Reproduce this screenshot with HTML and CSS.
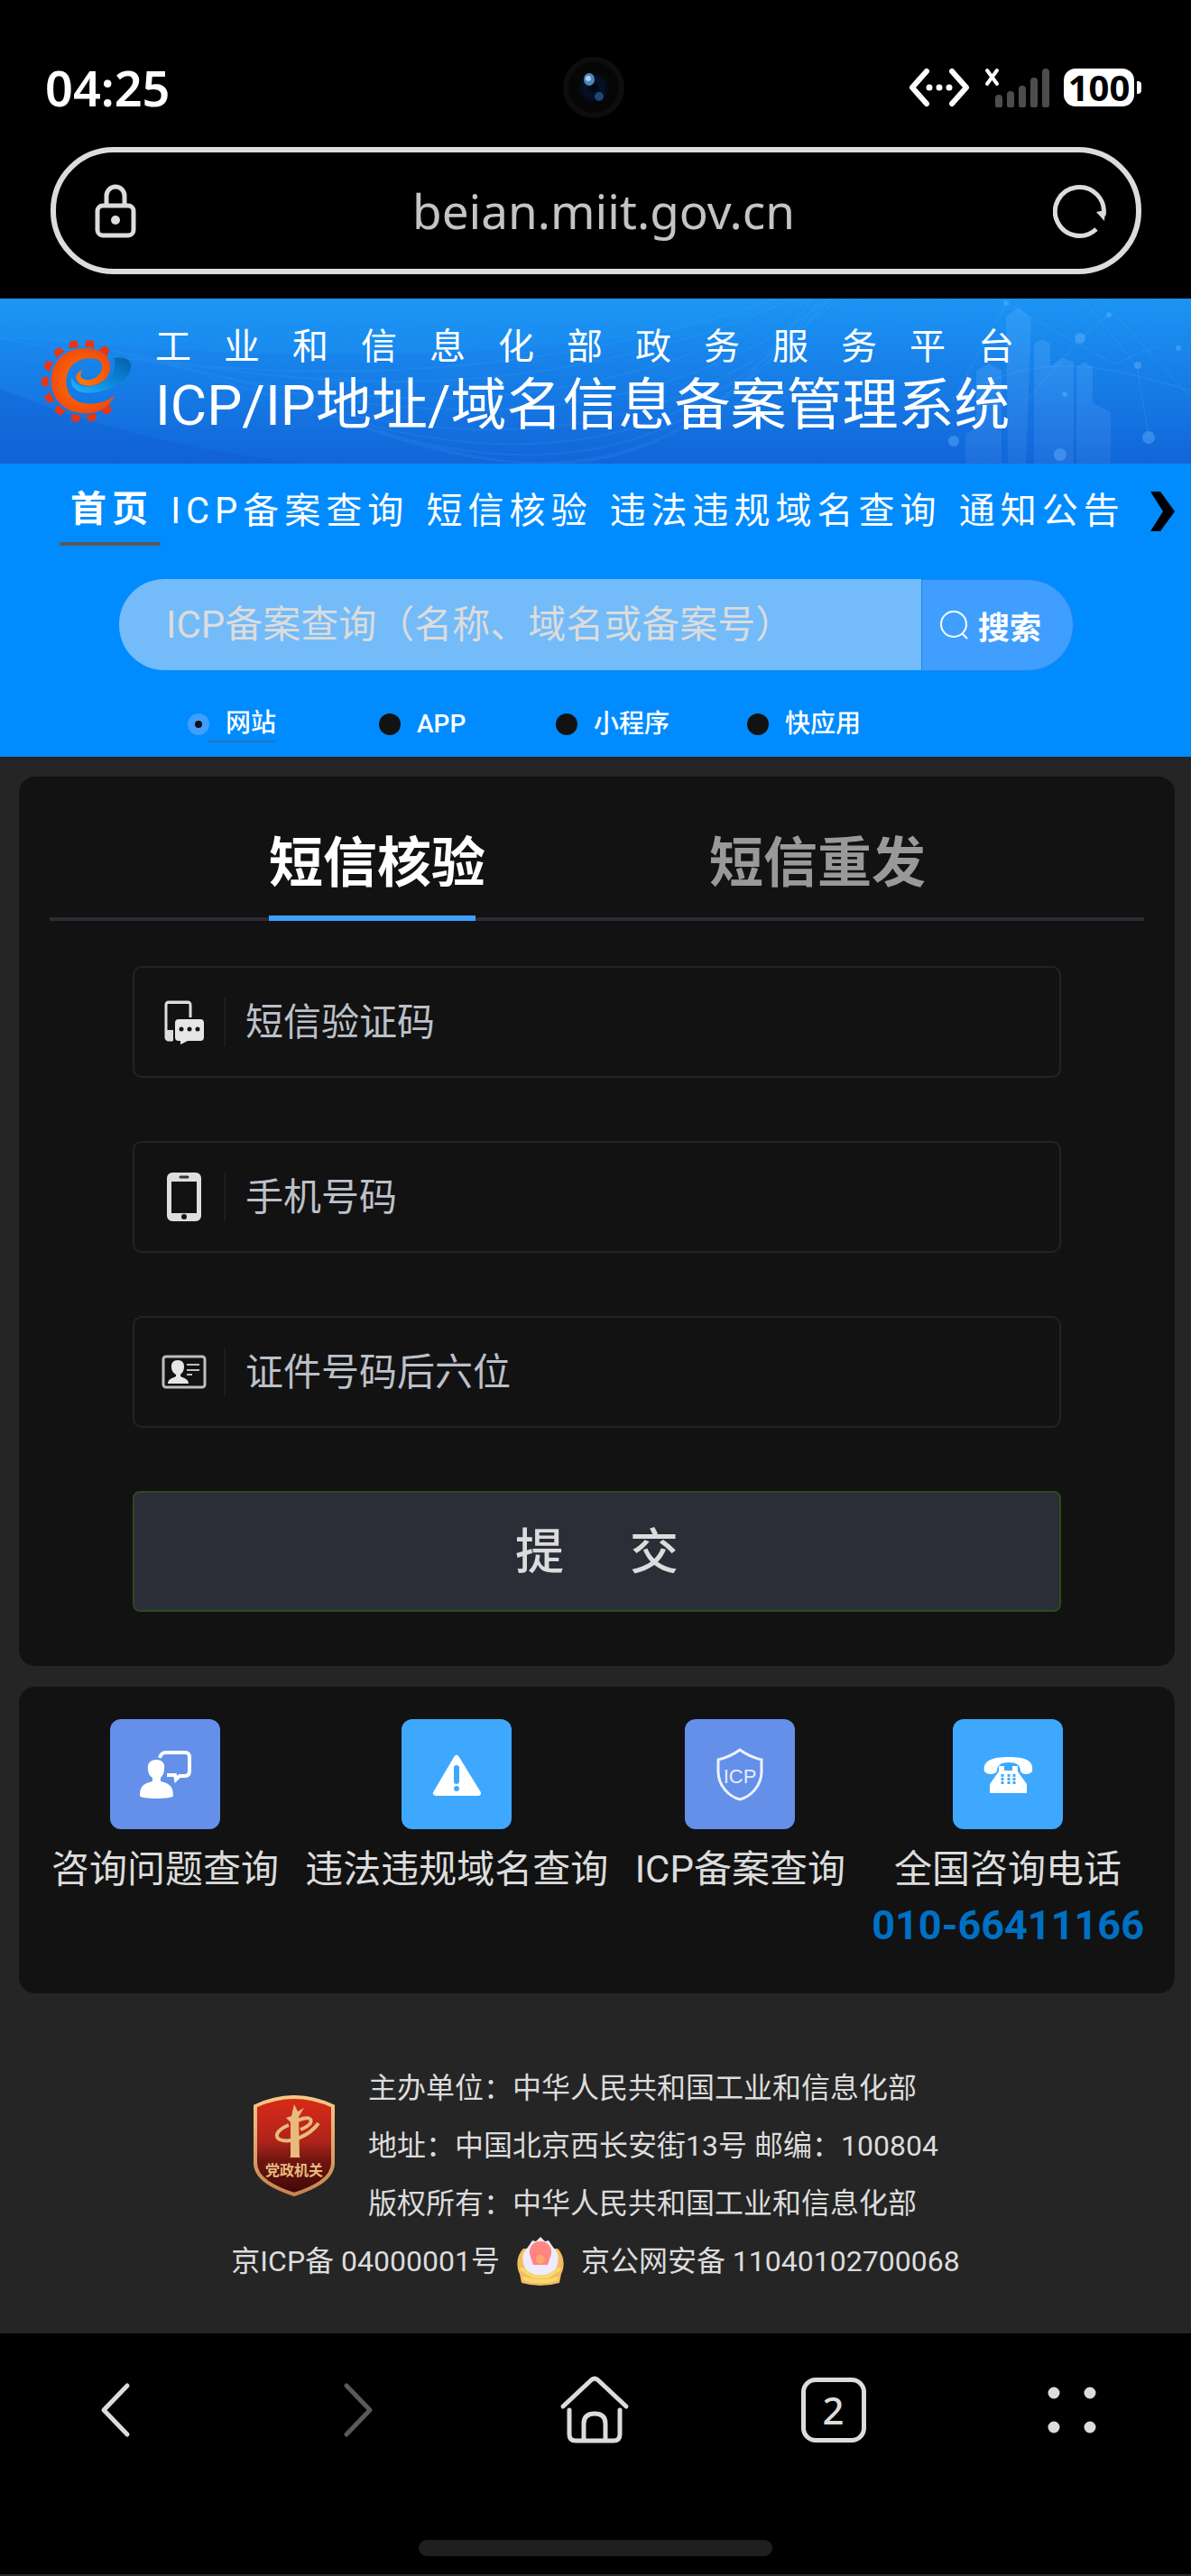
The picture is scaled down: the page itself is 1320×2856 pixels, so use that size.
FILE: index.html
```html
<!DOCTYPE html>
<html lang="zh-CN">
<head>
    <meta charset="UTF-8">
    <meta name="viewport" content="width=device-width, initial-scale=1.0">
    <title>ICP/IP地址/域名信息备案管理系统</title>
    <link rel="stylesheet" href="styles.css">
</head>
<body>
    <!-- 手机状态栏 -->
    <div class="status">
        <span class="clock">04:25</span>
        <svg class="camera" viewBox="0 0 70 70" width="70" height="70">
            <defs>
                <radialGradient id="lens"><stop offset="0" stop-color="#02030f"/><stop offset=".6" stop-color="#06122a"/><stop offset="1" stop-color="#05070b"/></radialGradient>
            </defs>
            <circle cx="35" cy="35" r="31" fill="#060606" stroke="#0d0d0d" stroke-width="6"/>
            <circle cx="35" cy="35" r="17" fill="url(#lens)"/>
            <ellipse cx="30" cy="26" rx="6" ry="7" fill="#4d86b8"/>
            <ellipse cx="29" cy="25" rx="3" ry="3" fill="#a5cfee"/>
            <ellipse cx="41" cy="45" rx="5" ry="5" fill="#1c4674"/>
        </svg>
        <div class="status-icons">
            <svg viewBox="0 0 68 44" width="68" height="44" fill="none" stroke="#fff" stroke-width="6" stroke-linecap="round" stroke-linejoin="round">
                <path d="M20 4L4 22l16 18M48 4l16 18-16 18"/>
                <path d="M23 22h0M34 22h0M45 22h0" stroke-width="7"/>
            </svg>
            <svg viewBox="0 0 72 44" width="72" height="44">
                <path d="M3 3l11 15M14 3L3 18" stroke="#fff" stroke-width="4" stroke-linecap="round"/>
                <path d="M16 34v7M29 30v11M42 24v17M55 15v26M68 5v36" stroke="#4d4d4d" stroke-width="8" stroke-linecap="round"/>
            </svg>
            <span class="battery">100</span>
        </div>
    </div>

    <!-- 地址栏 -->
    <div class="address-bar">
        <div class="address">
            <svg viewBox="0 0 46 60" width="46" height="60" fill="none" stroke="#dcdcdc" stroke-width="5">
                <rect x="3" y="24" width="40" height="33" rx="6"/>
                <path d="M13 24V13a10 10 0 0 1 20 0v11"/>
                <circle cx="23" cy="40" r="5" fill="#dcdcdc" stroke="none"/>
            </svg>
            <span class="url">beian.miit.gov.cn</span>
            <button class="plain" type="button" aria-label="刷新">
                <svg viewBox="0 0 60 62" width="60" height="62" fill="none" stroke="#dcdcdc" stroke-width="5">
                    <path d="M48 51A27 27 0 1 1 56 36"/>
                    <path d="M48 32l9 10 1-12z" fill="#dcdcdc" stroke="none"/>
                </svg>
            </button>
        </div>
    </div>

    <header class="banner">
        <svg class="banner-bg" viewBox="0 0 1320 183" preserveAspectRatio="xMidYMid slice" aria-hidden="true">
            <defs>
                <linearGradient id="sky" x1="0" y1="0" x2="0" y2="1"><stop offset="0" stop-color="#1b94f5"/><stop offset="1" stop-color="#1266d8"/></linearGradient>
                <linearGradient id="tower" x1="0" y1="0" x2="0" y2="1"><stop offset="0" stop-color="#6cbcff" stop-opacity=".24"/><stop offset="1" stop-color="#7db4ff" stop-opacity=".12"/></linearGradient>
            </defs>
            <rect width="1320" height="183" fill="url(#sky)"/>
            <path d="M0 0h900C700 60 420 80 0 44z" fill="#20a0f8" opacity=".18"/>
            <path d="M0 100C150 160 250 170 330 183H0z" fill="#1059cc" opacity=".3"/>
            <g fill="none" stroke="#4db4ff" stroke-opacity=".12" stroke-width="2">
                <path d="M0 44c260 50 560 60 860-44M60 44c300 70 560 70 820-44M120 56c280 80 540 80 780-56M180 70c280 80 540 80 740-70M230 86c260 90 500 90 700-86M280 100c240 90 460 100 640-100M330 116c220 90 420 90 590-116M370 130c200 80 380 90 540-130M420 146c180 60 330 70 480-146"/>
            </g>
            <g fill="url(#tower)">
                <path d="M1115 20l14-10 14 12-6 161h-20z"/>
                <path d="M1070 150l18-10 18 10v33h-36zM1082 80l14-8 14 8v103h-28zM1146 50l9-5 9 5v133h-18zM1153 82l24-16 13 4v113h-37zM1193 76l9-6 9 6v107h-18zM1198 125l10-11 23 12v57h-33z"/>
            </g>
            <g stroke="#6fc0ff" stroke-opacity=".18" fill="none">
                <path d="M1115 5l120 68 46-20M1200 0l60 75 13 78M1220 0l100 110M1115 5l-60 110M1229 18l-32 26-60 70M1060 110c100-60 180-30 260-8"/>
            </g>
            <g fill="#6fb9ff" fill-opacity=".4">
                <circle cx="1115" cy="5" r="3"/><circle cx="1229" cy="18" r="3"/><circle cx="1197" cy="44" r="6"/><circle cx="1261" cy="74" r="4"/><circle cx="1306" cy="55" r="3"/><circle cx="1273" cy="154" r="7"/><circle cx="1175" cy="173" r="7"/><circle cx="1057" cy="158" r="6"/><circle cx="1180" cy="106" r="3"/>
            </g>
        </svg>
        <svg class="logo" viewBox="45 80 306 285" width="102" height="95" role="img" aria-label="工业和信息化部">
            <defs>
                <radialGradient id="orange"><stop offset="0" stop-color="#ff7a00"/><stop offset="1" stop-color="#f14d0c"/></radialGradient>
                <linearGradient id="ring" x1="0" y1="1" x2="1" y2="0"><stop offset="0" stop-color="#23b4fb"/><stop offset=".5" stop-color="#0a86dc"/><stop offset="1" stop-color="#0560a8"/></linearGradient>
                <path id="tooth" d="M168 109l5-24h24l5 24q-17-5-34 0z" fill="#ea3510"/>
            </defs>
            <path d="M288 146c50-12 72 20 48 56-30 42-96 64-148 59-34-6-46-26-40-52 14 30 40 36 70 30 60-14 84-50 70-93z" fill="url(#ring)"/>
            <use href="#tooth" transform="rotate(11 185 222)"/>
            <use href="#tooth" transform="rotate(36 185 222)"/>
            <use href="#tooth" transform="rotate(-14 185 222)"/>
            <use href="#tooth" transform="rotate(-40 185 222)"/>
            <use href="#tooth" transform="rotate(-66 185 222)"/>
            <use href="#tooth" transform="rotate(-91 185 222)"/>
            <use href="#tooth" transform="rotate(-117 185 222)"/>
            <use href="#tooth" transform="rotate(-142 185 222)"/>
            <use href="#tooth" transform="rotate(-169 185 222)"/>
            <use href="#tooth" transform="rotate(166 185 222)"/>
            <use href="#tooth" transform="rotate(140 185 222)"/>
            <path d="M293 268C270 315 230 332 185 330C120 326 80 280 80 222C80 160 125 115 190 114C240 114 276 135 276 175C276 215 240 238 200 238C175 238 162 222 163 207C166 195 175 188 184 186C174 200 176 218 198 219C225 220 248 200 250 175C250 155 232 146 205 147C155 150 130 185 130 225C132 275 165 298 205 298C245 298 275 285 293 268Z" fill="url(#orange)"/>
        </svg>
        <div class="titles">
            <p class="platform">工业和信息化部政务服务平台</p>
            <h1>ICP/IP地址/域名信息备案管理系统</h1>
        </div>
    </header>

    <div class="top">
        <nav class="menu">
            <a class="active" href="#">首页</a>
            <a href="#">ICP备案查询</a>
            <a href="#">短信核验</a>
            <a href="#">违法违规域名查询</a>
            <a href="#">通知公告</a>
            <button class="plain next" type="button" aria-label="更多">
                <svg viewBox="0 0 28 44" width="28" height="44"><path d="M1 0h11l16 22-16 22H1l14-22z" fill="#000"/></svg>
            </button>
        </nav>

        <form class="search">
            <div class="search-box">
                <input type="text" aria-label="ICP备案查询" placeholder="ICP备案查询（名称、域名或备案号）">
                <button type="button">
                    <svg viewBox="0 0 32 32" width="32" height="32" fill="none" stroke="#fff" stroke-width="2"><circle cx="15" cy="15" r="14"/><path d="M24 25l6 6"/></svg>
                    搜索
                </button>
            </div>
            <div class="types">
                <label class="checked"><input type="radio" name="type" checked><span>网站</span></label>
                <label><input type="radio" name="type"><span>APP</span></label>
                <label><input type="radio" name="type"><span>小程序</span></label>
                <label><input type="radio" name="type"><span>快应用</span></label>
            </div>
        </form>
    </div>

    <main>
        <section class="card sms">
            <div class="tabs">
                <button class="tab on" type="button">短信核验</button>
                <button class="tab" type="button">短信重发</button>
            </div>
            <form class="fields">
                <label class="field">
                    <span class="icon">
                        <svg viewBox="0 0 46 50" width="46" height="50">
                            <path d="M30 20V6a3 3 0 0 0-3-3H6a3 3 0 0 0-3 3v36a3 3 0 0 0 3 3h4" fill="none" stroke="#dedede" stroke-width="3"/>
                            <path d="M4 2h25l2 3H2zM2 34h9v12H5l-3-3z" fill="#dedede"/>
                            <path d="M17 22h24a4 4 0 0 1 4 4v16a4 4 0 0 1-4 4H27l-8 4v-4h-2a4 4 0 0 1-4-4V26a4 4 0 0 1 4-4z" fill="#e6e6e6"/>
                            <path d="M20 33h0M29 33h0M38 33h0" stroke="#121212" stroke-width="5" stroke-linecap="round"/>
                        </svg>
                    </span>
                    <input type="text" aria-label="短信验证码" placeholder="短信验证码">
                </label>
                <label class="field">
                    <span class="icon">
                        <svg viewBox="0 0 38 54" width="38" height="54">
                            <path fill-rule="evenodd" d="M6 0h26a6 6 0 0 1 6 6v42a6 6 0 0 1-6 6H6a6 6 0 0 1-6-6V6a6 6 0 0 1 6-6zM5 10v35h28V10z" fill="#dedede"/>
                            <path d="M15 5h8" stroke="#333" stroke-width="3" stroke-linecap="round"/>
                            <circle cx="19" cy="49" r="3" fill="#121212"/>
                        </svg>
                    </span>
                    <input type="tel" aria-label="手机号码" placeholder="手机号码">
                </label>
                <label class="field">
                    <span class="icon">
                        <svg viewBox="0 0 50 38" width="50" height="38">
                            <rect x="2" y="2" width="46" height="34" rx="3" fill="none" stroke="#bdbdbd" stroke-width="3"/>
                            <path d="M18 6c5 0 7 3 7 7 0 5-2 7-4 9v2c4 2 9 3 9 8H7c0-5 5-6 9-8v-2c-3-2-5-4-5-9 0-4 2-7 7-7z" fill="#e6e6e6"/>
                            <path d="M28 11h14M28 17h14M28 22h6" stroke="#bdbdbd" stroke-width="2"/>
                        </svg>
                    </span>
                    <input type="text" aria-label="证件号码后六位" placeholder="证件号码后六位">
                </label>
                <button class="submit" type="button">提<span>交</span></button>
            </form>
        </section>

        <section class="card links">
            <a class="link" href="#">
                <svg class="tile violet" viewBox="0 0 122 122" width="122" height="122">
                    <path d="M55 43c1-4 3-6 7-6h21c4 0 5 2 5 6v14c0 4-2 6-5 6h-6l-4 4-1-5H63" fill="none" stroke="#fff" stroke-width="4"/>
                    <path d="M51 45c7 0 10 4 9 10 0 5-2 8-4 10v4c7 2 14 3 14 16 0 4-37 4-37 0 0-13 7-14 14-16v-4c-3-2-5-5-5-10-1-6 3-10 9-10z" fill="#fff"/>
                </svg>
                <span>咨询问题查询</span>
            </a>
            <a class="link" href="#">
                <svg class="tile sky" viewBox="0 0 122 122" width="122" height="122">
                    <path d="M61 43L38 82h47z" fill="#fff" stroke="#fff" stroke-width="6" stroke-linejoin="round"/>
                    <path d="M61 54v15M61 77h0" stroke="#3ea8ff" stroke-width="6" stroke-linecap="round"/>
                </svg>
                <span>违法违规域名查询</span>
            </a>
            <a class="link" href="#">
                <svg class="tile violet" viewBox="0 0 122 122" width="122" height="122">
                    <path d="M61 34c8 6 16 9 24 11v13c0 16-12 28-24 31-12-3-24-15-24-31V45c8-2 16-5 24-11z" fill="none" stroke="#eef2fd" stroke-width="3"/>
                    <text x="61" y="71" text-anchor="middle" class="icp">ICP</text>
                </svg>
                <span>ICP备案查询</span>
            </a>
            <div class="link">
                <svg class="tile sky" viewBox="0 0 122 122" width="122" height="122">
                    <path d="M35 58c-2-12 8-16 27-16s28 4 26 16c-3 4-11 4-13 0 0-7-4-10-13-10s-13 3-13 10c-3 4-11 4-14 0z" fill="#fff"/>
                    <path d="M51 52h6v5h9v-5h6v6l10 14v10H41V72l10-14z" fill="#fff"/>
                    <path d="M55 61v12M62 61v12M68 61v12" stroke="#3ea8ff" stroke-width="3" stroke-dasharray="3 1"/>
                </svg>
                <span>全国咨询电话</span>
                <a class="phone" href="tel:010-66411166">010-66411166</a>
            </div>
        </section>
    </main>

    <footer>
        <div class="org">
            <svg viewBox="0 0 92 112" width="92" height="112" role="img" aria-label="党政机关">
                <defs>
                    <linearGradient id="red" x1="0" y1="0" x2="0" y2="1"><stop offset="0" stop-color="#da2a17"/><stop offset=".45" stop-color="#b0241b"/><stop offset=".65" stop-color="#701612"/><stop offset="1" stop-color="#3d0806"/></linearGradient>
                    <linearGradient id="gold" x1="0" y1="0" x2="0" y2="1"><stop offset="0" stop-color="#f5c985"/><stop offset="1" stop-color="#c8834f"/></linearGradient>
                </defs>
                <path d="M3 12Q46-8 89 12v63c0 18-22 28-43 35C25 103 3 93 3 75z" fill="url(#red)" stroke="url(#gold)" stroke-width="4"/>
                <path d="M46 10l4 8 7-4-6 10 1 44 1 1H41l1-1V30l-5-5 6-2z" fill="#e8bb7c"/>
                <path d="M40 33C26 39 24 46 30 49c11 5 33-4 43-18M50 28c10-5 17-3 14 3-2 3-6 5-11 7" fill="none" stroke="#e8bb7c" stroke-width="4"/>
                <text x="46" y="89" text-anchor="middle" class="seal">党政机关</text>
            </svg>
            <div>
                <p>主办单位：中华人民共和国工业和信息化部</p>
                <p>地址：中国北京西长安街13号 邮编：100804</p>
                <p>版权所有：中华人民共和国工业和信息化部</p>
            </div>
        </div>
        <p class="record">
            <a href="#">京ICP备 04000001号</a>
            <svg viewBox="0 0 54 56" width="54" height="56" aria-hidden="true">
                <path d="M8 14C0 22 0 35 4 42l2 10q21 6 42 0l2-10c4-7 4-20-4-28z" fill="#f2bd62"/>
                <path d="M18 5l4 1 5-5 5 5 4-1 4 6 6 8c2 10-1 20-7 22l-12 4-12-4C9 38 6 28 8 19l6-8z" fill="#efeafc"/>
                <path d="M27 6c8 0 13 6 12 14l-4 12H19l-4-12C14 12 19 6 27 6z" fill="#ff8581"/>
                <path d="M5 36l14 9h16l14-9M8 47l10 3h18l10-3" fill="none" stroke="#f8d96c" stroke-width="4"/>
                <circle cx="27" cy="26" r="5" fill="#ffa56e"/>
            </svg>
            <a href="#">京公网安备 11040102700068</a>
        </p>
    </footer>

    <!-- 浏览器工具栏 -->
    <div class="toolbar">
        <div class="tools">
            <button class="plain" type="button" aria-label="后退"><svg viewBox="0 0 80 80" width="80" height="80"><path d="M51 13L25 40l26 27"/></svg></button>
            <button class="plain off" type="button" aria-label="前进"><svg viewBox="0 0 80 80" width="80" height="80"><path d="M29 13l26 27-26 27"/></svg></button>
            <button class="plain" type="button" aria-label="主页"><svg viewBox="0 0 80 80" width="80" height="80"><path d="M5 36L36 7q4-4 8 0l31 29M12 40v27q0 7 7 7h42q7 0 7-7V40M28 74V55q0-11 12-11t12 11v19"/></svg></button>
            <button class="plain" type="button" aria-label="标签页"><span class="count">2</span></button>
            <button class="plain" type="button" aria-label="菜单"><svg viewBox="0 0 80 80" width="80" height="80"><path class="dots" d="M20 21h0M60 21h0M20 59h0M60 59h0"/></svg></button>
        </div>
        <div class="home-bar"></div>
    </div>
</body>
</html>
```
FILE: styles.css
```css
* {
    box-sizing: border-box;
}

body {
    margin: 0;
    background-color: #252525;
    color: #dcdcdc;
    font-family: Roboto, "Noto Sans CJK SC", sans-serif;
}

p, h1 {
    margin: 0;
    font-weight: normal;
}

a {
    color: inherit;
    text-decoration: none;
}

svg {
    display: block;
    flex: none;
}

button, input {
    font-family: inherit;
    color: inherit;
    margin: 0;
    padding: 0;
    border: none;
    background: none;
}

/* 状态栏 */
.status {
    display: grid;
    grid-template-columns: 1fr 70px 1fr;
    align-items: center;
    align-content: center;
    height: 163px;
    padding: 30px 54px 0 50px;
    background-color: #000;
    color: #fff;
}

.clock {
    font-family: "Noto Sans", sans-serif;
    font-size: 54px;
    line-height: 60px;
    font-weight: 600;
}

.status-icons {
    display: flex;
    justify-content: flex-end;
    align-items: center;
    gap: 16px;
}

.battery {
    position: relative;
    width: 78px;
    height: 42px;
    margin-right: 9px;
    border-radius: 13px;
    background-color: #fff;
    color: #000;
    font-family: "Noto Sans", sans-serif;
    font-size: 40px;
    line-height: 42px;
    font-weight: 700;
    text-align: center;
}

.battery::after {
    content: "";
    position: absolute;
    right: -8px;
    top: 14px;
    width: 5px;
    height: 14px;
    border-radius: 0 4px 4px 0;
    background-color: #fff;
}

/* 地址栏 */
.address-bar {
    padding: 0 55px 27px 56px;
    background-color: #000;
}

.address {
    display: flex;
    align-items: center;
    justify-content: space-between;
    height: 141px;
    padding: 0 32px 0 43px;
    border: 6px solid #dcdcdc;
    border-radius: 70px;
}

.url {
    font-family: "Noto Sans", sans-serif;
    font-size: 53px;
    line-height: 72px;
    color: #c4c4c4;
    margin-left: 20px;
}

/* 顶部横幅 */
.banner {
    position: relative;
    display: flex;
    align-items: center;
    gap: 25px;
    height: 183px;
    padding-left: 45px;
    color: #fff;
}

.banner-bg {
    position: absolute;
    top: 0;
    left: 0;
    width: 100%;
    height: 100%;
}

.logo, .titles {
    position: relative;
}

.platform {
    font-size: 40px;
    line-height: 58px;
    letter-spacing: 36px;
    white-space: nowrap;
}

h1 {
    font-size: 62px;
    line-height: 72px;
    white-space: nowrap;
}

.titles {
    padding-bottom: 4px;
}

.top {
    background-color: #008cff;
    color: #fff;
    height: 325px;
}

.menu {
    display: flex;
    align-items: center;
    justify-content: space-between;
    padding: 15px 18px 0 66px;
    font-size: 40px;
    line-height: 72px;
    letter-spacing: 6px;
    white-space: nowrap;
}

.menu .active {
    padding: 0 8px 0 12px;
    border-bottom: 4px solid #5a5a5a;
    margin-right: -8px;
    font-weight: bold;
}

.menu .next {
    margin-left: 8px;
}

.search-box {
    display: flex;
    margin: 37px 130px 0 132px;
}

.search-box input {
    flex: 1;
    min-width: 0;
    height: 101px;
    padding-left: 52px;
    border-radius: 50px 0 0 50px;
    background-color: #73bbf9;
    font-size: 42px;
}

input::placeholder {
    color: #dcdcdc;
    opacity: 1;
}

.search-box button {
    display: flex;
    align-items: center;
    gap: 10px;
    width: 169px;
    height: 102px;
    padding-left: 20px;
    border: 1px solid #2287ec;
    border-radius: 0 52px 52px 0;
    background-color: #409eff;
    font-size: 35px;
    font-weight: bold;
}

.types {
    display: grid;
    grid-template-columns: 212px 196px 212px 140px;
    margin: 39px 0 0 208px;
    font-size: 28px;
    line-height: 38px;
    font-weight: 500;
}

.types label {
    display: flex;
    align-items: center;
}

.types input {
    appearance: none;
    width: 24px;
    height: 24px;
    border-radius: 50%;
    background-color: #121212;
}

.types span {
    padding-left: 18px;
}

.types .checked span {
    border-bottom: 2px solid #2b74b5;
}

.types input:checked {
    border: 8px solid #409eff;
}

/* 卡片 */
main {
    padding: 22px 18px 0 21px;
}

.card {
    margin-bottom: 23px;
    border-radius: 18px;
    background-color: #121212;
}

.sms {
    padding: 32px 34px 60px;
}

.tabs {
    display: flex;
    gap: 259px;
    padding-left: 243px;
    border-bottom: 4px solid #2b2b33;
}

.tab {
    width: 229px;
    height: 128px;
    margin-bottom: -4px;
    padding-top: 8px;
    border-bottom: 6px solid transparent;
    color: #999;
    font-size: 60px;
    line-height: 114px;
    font-weight: bold;
    white-space: nowrap;
}

.tab.on {
    border-color: #409eff;
    color: #fff;
}

.fields {
    display: flex;
    flex-direction: column;
    gap: 70px;
    padding: 50px 92px 0;
}

.field {
    display: flex;
    align-items: center;
    height: 124px;
    border: 2px solid #232323;
    border-radius: 10px;
}

.icon {
    display: flex;
    align-items: center;
    justify-content: center;
    width: 101px;
    height: 54px;
    padding-left: 10px;
    border-right: 2px solid #1d1d1d;
}

.field input {
    flex: 1;
    min-width: 0;
    height: 100%;
    padding: 0 22px;
    font-size: 42px;
}

.field input::placeholder {
    color: #bcc0c9;
}

.submit {
    height: 134px;
    padding-bottom: 8px;
    border: 2px solid #2b4b1c;
    border-radius: 8px;
    background-color: #2b2e37;
    color: #dcdcdc;
    font-size: 54px;
    font-weight: 500;
}

.submit span {
    margin-left: 73px;
}

.links {
    display: flex;
    justify-content: space-between;
    height: 340px;
    padding: 36px 34px 0 36px;
}

.link {
    display: flex;
    flex-direction: column;
    align-items: center;
    font-size: 42px;
    line-height: 62px;
    white-space: nowrap;
}

.tile {
    margin-bottom: 14px;
    border-radius: 12px;
}

.violet {
    background-color: #6490ea;
}

.sky {
    background-color: #3ea8ff;
}

.icp {
    font-family: "Liberation Sans", sans-serif;
    font-size: 22px;
    fill: #e6ecfc;
}

.phone {
    color: #0070c4;
    font-size: 45px;
    font-weight: bold;
}

/* 页脚 */
footer {
    padding: 50px 0 48px;
    font-size: 32px;
    line-height: 64px;
}

.org {
    display: flex;
    align-items: center;
    justify-content: center;
    gap: 36px;
}

.seal {
    fill: #e8bb7c;
    font-size: 16px;
    font-weight: bold;
}

.record {
    display: flex;
    align-items: center;
    justify-content: center;
    gap: 18px;
}

/* 工具栏 */
.toolbar {
    background-color: #000;
    padding: 45px 0 20px;
}

.tools {
    display: flex;
    justify-content: space-between;
    padding: 0 92px 0 90px;
}

.tools svg {
    fill: none;
    stroke: #dcdcdc;
    stroke-width: 5;
    stroke-linecap: round;
    stroke-linejoin: round;
}

.tools .off path {
    stroke: #5a5a5a;
}

.tools .dots {
    stroke-width: 13;
}

.tools button {
    width: 80px;
}

.count {
    display: block;
    width: 72px;
    height: 72px;
    margin: 0 auto;
    border: 5px solid #dcdcdc;
    border-radius: 16px;
    font-family: "Noto Sans", sans-serif;
    font-size: 42px;
    line-height: 62px;
    font-weight: 500;
    color: #dcdcdc;
}

.home-bar {
    width: 392px;
    height: 18px;
    margin: 104px auto 0;
    border-radius: 9px;
    background-color: #1f1f1f;
}
```
